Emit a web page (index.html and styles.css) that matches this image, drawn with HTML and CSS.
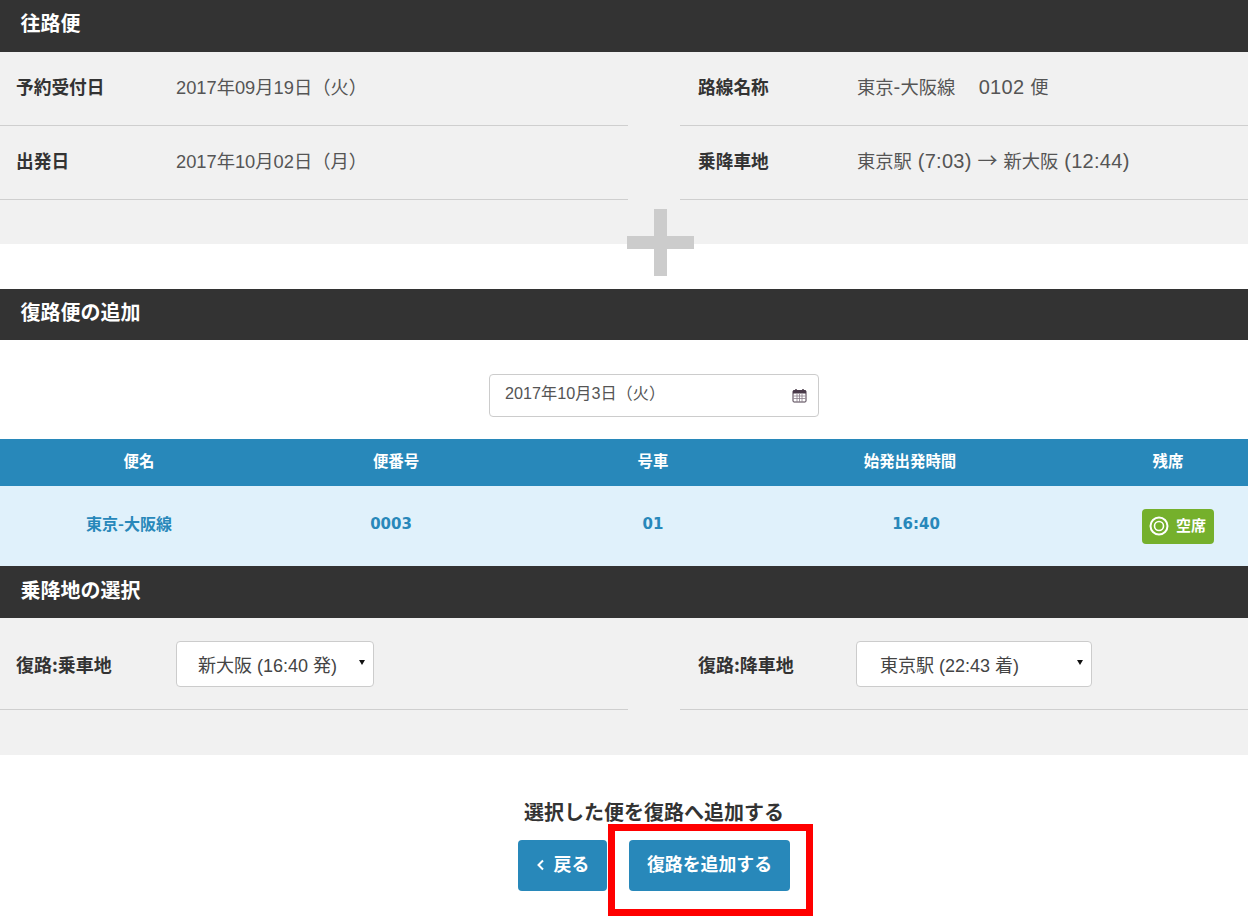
FILE: index.html
```html
<!DOCTYPE html>
<html lang="ja">
<head>
<meta charset="utf-8">
<title>復路便の追加</title>
<link rel="stylesheet" href="styles.css">
</head>
<body>
<section class="outbound">
  <h2 class="bar">往路便</h2>
  <div class="panel panel-tall">
    <div class="pairs">
      <dl class="pair"><dt>予約受付日</dt><dd>2017年09月19日（火）</dd></dl>
      <dl class="pair"><dt>路線名称</dt><dd>東京<span class="lat">-</span>大阪線　<span class="lat lat-num">0102 </span>便</dd></dl>
      <dl class="pair"><dt>出発日</dt><dd>2017年10月02日（月）</dd></dl>
      <dl class="pair"><dt>乗降車地</dt><dd>東京駅<span class="lat"> (7:03) </span><span class="arrow">→</span><span class="lat"> </span>新大阪<span class="lat"> (12:44)</span></dd></dl>
    </div>
  </div>
  <svg class="plus" width="67" height="67" viewBox="0 0 67 67" aria-hidden="true"><path d="M27 0h13v27h27v13H40v27H27V40H0V27h27z" fill="#cccccc"/></svg>
</section>

<section class="return">
  <h2 class="bar">復路便の追加</h2>
  <div class="date-wrap">
    <div class="date-input">
      <span>2017年10月3日（火）</span>
      <svg class="cal" width="15" height="15" viewBox="0 0 15 15" aria-hidden="true">
        <rect x="1" y="2.5" width="13" height="11.5" rx="1" fill="#fff" stroke="#4a3b4a"/>
        <path d="M1 2.5h13v3H1z" fill="#4a3b4a"/>
        <path d="M1.5 8h12M1.5 10.5h12M5 6v8M7.5 6v8M10 6v8" stroke="#8a7f8a" stroke-width=".8" fill="none"/>
        <rect x="3" y="1" width="2" height="3" rx="1" fill="#4a3b4a"/>
        <rect x="10" y="1" width="2" height="3" rx="1" fill="#4a3b4a"/>
      </svg>
    </div>
  </div>
  <div class="grid grid-head">
    <div>便名</div><div>便番号</div><div>号車</div><div>始発出発時間</div><div class="last">残席</div>
  </div>
  <div class="grid grid-row">
    <div class="route">東京-大阪線</div><div>0003</div><div>01</div><div>16:40</div>
    <div class="last"><span class="badge"><svg width="20" height="20" viewBox="0 0 20 20" aria-hidden="true"><circle cx="10" cy="10" r="8.5" fill="none" stroke="#fff" stroke-width="2"/><circle cx="10" cy="10" r="4.5" fill="none" stroke="#fff" stroke-width="1.6"/></svg><span class="badge-text">空席</span></span></div>
  </div>
</section>

<section class="boarding">
  <h2 class="bar">乗降地の選択</h2>
  <div class="panel">
    <div class="pairs">
      <dl class="pair pair-select"><dt>復路:乗車地</dt><dd><span class="select select-a">新大阪 (16:40 発)<i class="caret"></i></span></dd></dl>
      <dl class="pair pair-select"><dt>復路:降車地</dt><dd><span class="select select-b">東京駅 (22:43 着)<i class="caret"></i></span></dd></dl>
    </div>
  </div>
</section>

<section class="actions">
  <p class="lead">選択した便を復路へ追加する</p>
  <div class="buttons">
    <a class="btn btn-back"><svg width="9" height="13" viewBox="0 0 9 13" aria-hidden="true"><path d="M7 2.5L2.5 7 7 11.5" fill="none" stroke="#fff" stroke-width="2"/></svg>戻る</a>
    <a class="btn btn-add">復路を追加する<span class="highlight"></span></a>
  </div>
</section>
</body>
</html>
```
FILE: styles.css
```css
* { box-sizing: border-box; }
html, body { margin: 0; padding: 0; }
body {
  width: 1248px;
  height: 916px;
  overflow: hidden;
  background: #fff;
  color: #333;
  font-family: "Noto Sans CJK JP", "Liberation Sans", sans-serif;
}
h2, p, dl, dd { margin: 0; }

.bar {
  height: 52px;
  padding-left: 20.5px;
  background: #333;
  color: #fff;
  font-size: 20px;
  font-weight: 700;
  line-height: 46px;
}
.boarding .bar { line-height: 48px; }
.outbound { position: relative; height: 289px; }
.panel { background: #f1f1f1; height: 137px; }
.panel-tall { height: 192px; }
.pairs {
  display: grid;
  grid-template-columns: 628px 568px;
  column-gap: 52px;
}
.pair {
  display: flex;
  align-items: center;
  height: 74px;
  padding: 0 0 6px 16px;
  border-bottom: 1px solid #cfcfcf;
}
.pairs .pair:nth-child(even) { padding-left: 18px; }
.pair dt {
  width: 160px;
  flex: none;
  font-size: 17.7px;
  font-weight: 700;
  color: #333;
}
.pair dd {
  font-family: "Liberation Sans", "Noto Sans CJK JP", sans-serif;
  font-size: 18.3px;
  color: #555;
  white-space: pre;
}
.pairs .pair:nth-child(even) dt { width: 159px; }
.lat { font-size: 20px; letter-spacing: .3px; }
.lat-num { margin-left: 5px; }
.arrow {
  font-family: "Noto Sans CJK JP", sans-serif;
  font-size: 20px;
  line-height: 1;
}
.pair-select { height: 92px; padding-bottom: 0; }
.pair-select dt { padding-top: 1px; font-size: 18px; }
.pairs .pair-select:nth-child(even) dt { width: 158px; }
.plus { position: absolute; left: 627px; top: 209px; }

.return .bar { height: 51px; }
.date-wrap { height: 99px; padding: 34px 0 0 489px; }
.date-input {
  display: flex;
  align-items: center;
  justify-content: space-between;
  width: 330px;
  height: 43px;
  padding: 0 11px 7px 15px;
  border: 1px solid #ccc;
  border-radius: 4px;
  background: #fff;
  font-family: "Liberation Sans", "Noto Sans CJK JP", sans-serif;
  font-size: 16.2px;
  color: #555;
}
.cal { margin-top: 7px; }
.grid {
  display: grid;
  text-align: center;
  align-items: center;
  font-weight: 700;
}
.grid-head {
  grid-template-columns: 278px 236px 278px 236px 220px;
  height: 47px;
  padding-bottom: 5px;
  background: #2888ba;
  color: #fff;
  font-size: 15.4px;
}
.grid-head .last { padding-left: 60px; }
.grid-row {
  grid-template-columns: 258px 266px 258px 268px 198px;
  height: 80px;
  background: #e0f1fb;
  color: #2888ba;
  font-family: "DejaVu Sans", "Noto Sans CJK JP", sans-serif;
  font-size: 15px;
}
.grid-row > div { padding-bottom: 5px; }
.grid-row .route {
  font-family: "Noto Sans CJK JP", sans-serif;
  font-size: 16px;
  padding-bottom: 7px;
}
.grid-row .last { padding: 0 0 0 58px; }
.badge {
  display: inline-flex;
  align-items: center;
  gap: 7px;
  width: 72px;
  height: 35px;
  padding-left: 7px;
  border-radius: 4px;
  background: #75b02c;
  color: #fff;
  font-family: "Noto Sans CJK JP", sans-serif;
  font-size: 15px;
}
.badge-text { padding-bottom: 3px; }
.select {
  position: relative;
  display: block;
  height: 46px;
  border: 1px solid #ccc;
  border-radius: 4px;
  background: #fff;
  font-size: 18px;
  line-height: 48px;
  padding-left: 21px;
  color: #444;
}
.select-a { width: 198px; }
.select-b { width: 236px; padding-left: 23px; }
.caret {
  position: absolute;
  right: 8px;
  top: 18px;
  border-left: 3px solid transparent;
  border-right: 3px solid transparent;
  border-top: 5px solid #111;
}

.actions { padding-top: 43px; }
.lead {
  text-align: center;
  font-size: 20px;
  font-weight: 700;
  line-height: 28px;
  padding-left: 60px;
  color: #333;
}
.buttons {
  display: flex;
  gap: 22px;
  padding: 14px 0 0 518px;
}
.btn {
  position: relative;
  display: flex;
  align-items: center;
  justify-content: center;
  height: 51px;
  border-radius: 4px;
  background: #2888ba;
  color: #fff;
  font-size: 17.9px;
  font-weight: 700;
  padding-bottom: 5px;
}
.btn-back { width: 89px; gap: 9px; }
.btn-back svg { margin-top: 3px; }
.btn-add { width: 161px; }
.highlight {
  position: absolute;
  left: -21px;
  top: -16px;
  width: 205px;
  height: 92px;
  border: 7px solid #f00;
  pointer-events: none;
}
```
